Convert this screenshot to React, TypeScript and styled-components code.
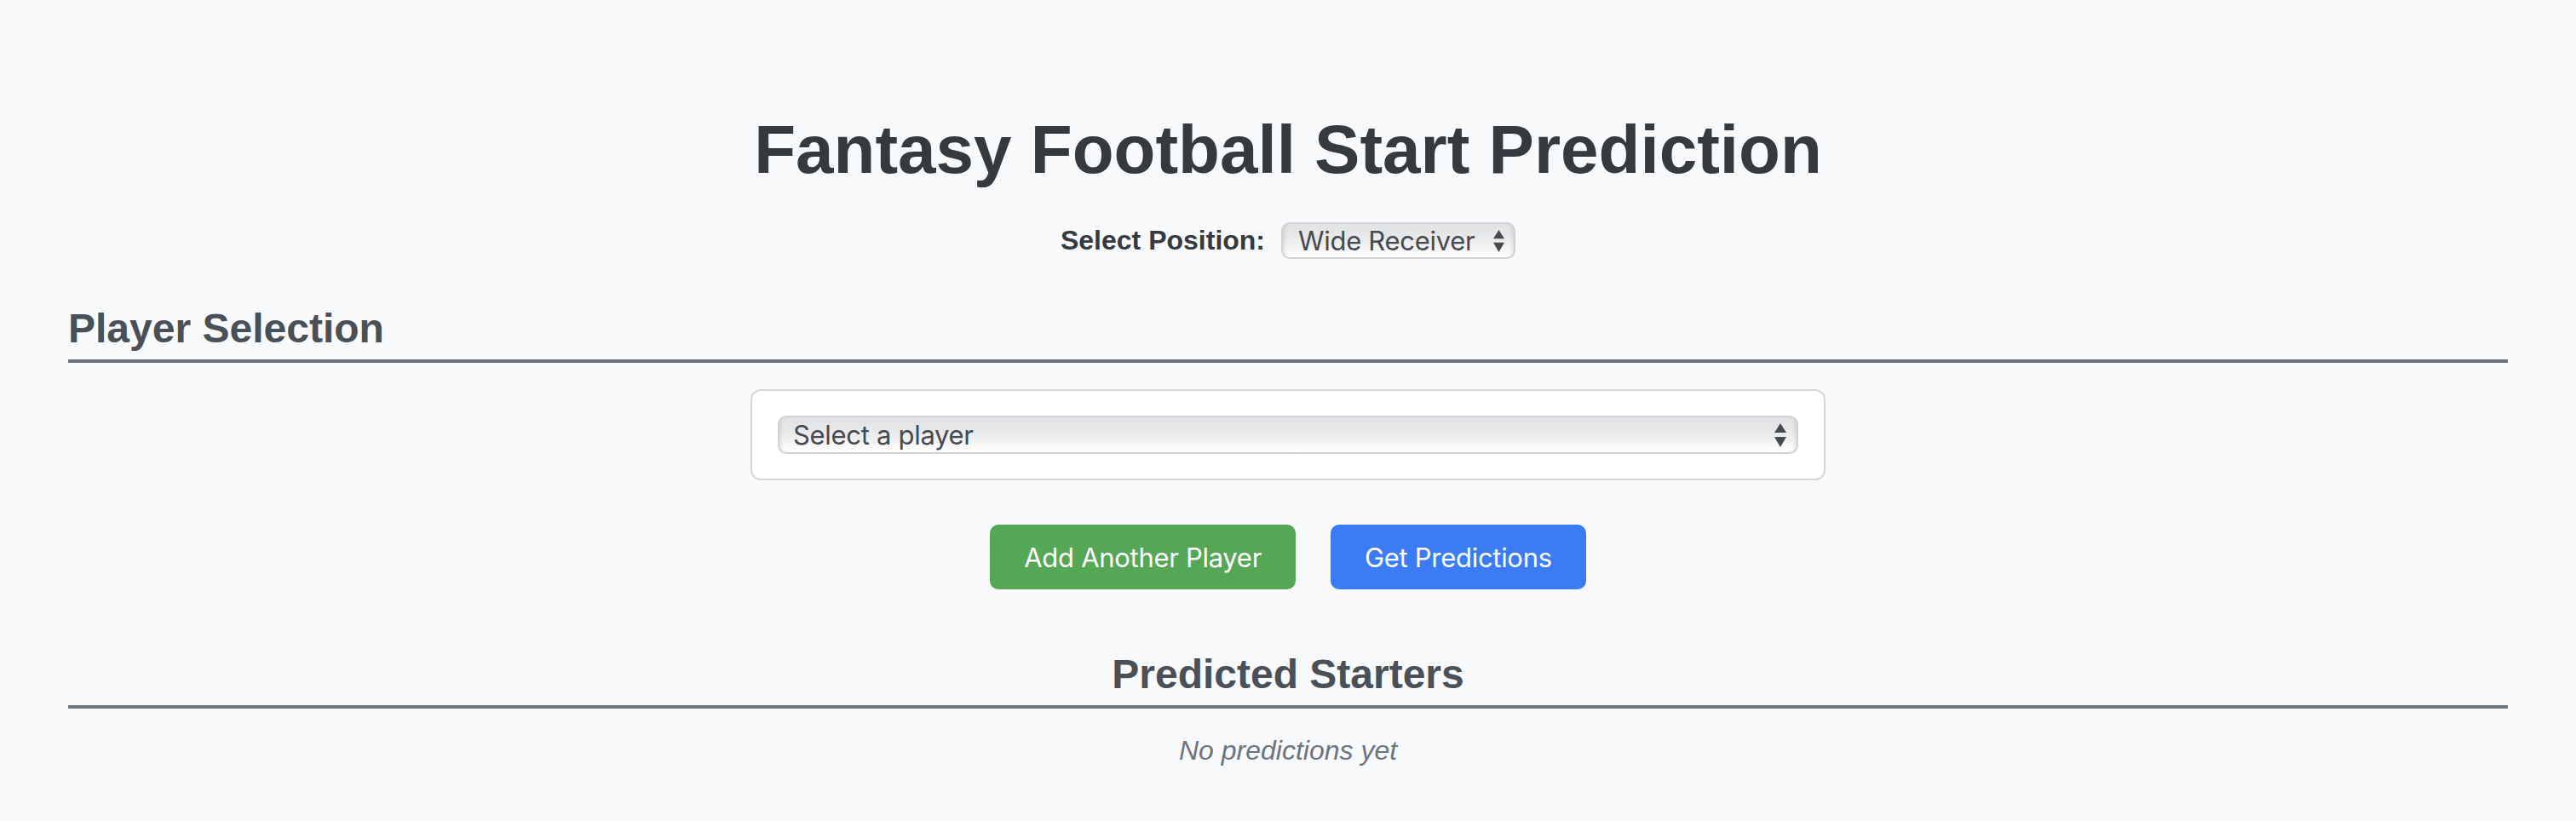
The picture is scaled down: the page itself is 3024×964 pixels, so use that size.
import styled, { createGlobalStyle } from 'styled-components';

const GlobalStyle = createGlobalStyle`
  html, body {
    margin: 0;
    padding: 0;
    background: #f8f9fa;
  }
  body {
    font-family: 'Liberation Sans', Arial, Helvetica, sans-serif;
    color: #343a40;
  }
`;

const Page = styled.div`
  padding: 130px 80px 60px;
  min-height: 964px;
  box-sizing: border-box;
`;

const Title = styled.h1`
  margin: 0;
  font-size: 80px;
  font-weight: 700;
  line-height: normal;
  text-align: center;
  color: #343a40;
`;

const PositionRow = styled.div`
  margin-top: 39px;
  display: flex;
  justify-content: center;
  align-items: center;
  gap: 19px;
`;

const Label = styled.label`
  font-size: 32px;
  font-weight: 700;
  color: #343a40;
`;

const SelectWrap = styled.div<{ $full?: boolean }>`
  position: relative;
  width: ${(p) => (p.$full ? '100%' : '275px')};
`;

const Select = styled.select<{ $full?: boolean }>`
  appearance: none;
  -webkit-appearance: none;
  display: block;
  width: 100%;
  box-sizing: border-box;
  height: ${(p) => (p.$full ? '45px' : '43px')};
  padding: 0 40px 0 ${(p) => (p.$full ? '16px' : '18px')};
  border: 2px solid #cfd2d6;
  border-radius: 10px;
  background: linear-gradient(
    to bottom,
    #e2e3e5 0%,
    #e6e7e9 35%,
    #eeeff0 60%,
    #f9f9fa 85%,
    #ffffff 100%
  );
  box-shadow: inset 5px 0 5px -4px rgba(0, 0, 0, 0.12),
    inset -5px 0 5px -4px rgba(0, 0, 0, 0.12);
  font-family: Inter, 'Liberation Sans', sans-serif;
  font-size: 31px;
  letter-spacing: -0.3px;
  color: #46494e;
  outline: none;
`;

const Arrows = styled.svg<{ $full?: boolean }>`
  position: absolute;
  right: ${(p) => (p.$full ? '14px' : '13px')};
  top: 50%;
  transform: translateY(-50%);
  width: ${(p) => (p.$full ? '14px' : '13px')};
  height: ${(p) => (p.$full ? '28px' : '26px')};
  pointer-events: none;
`;

const PlayerCard = styled.div`
  width: 1262px;
  box-sizing: border-box;
  margin: 31px auto 0;
  padding: 29px 30px;
  background: #ffffff;
  border: 2px solid #d3d6da;
  border-radius: 12px;
`;

const SectionTitle = styled.h2<{ $center?: boolean }>`
  margin: ${(p) => (p.$center ? '72px 0 0' : '54px 0 0')};
  padding-bottom: 9px;
  border-bottom: 4px solid #6c757d;
  font-size: 48px;
  font-weight: 700;
  line-height: normal;
  color: #495057;
  text-align: ${(p) => (p.$center ? 'center' : 'left')};
`;

const ButtonRow = styled.div`
  margin-top: 52px;
  display: flex;
  justify-content: center;
  gap: 41px;
`;

const Button = styled.button<{ $variant: 'green' | 'blue' }>`
  height: 76px;
  padding: 0 40px;
  border: none;
  border-radius: 10px;
  background: ${(p) => (p.$variant === 'green' ? '#55a655' : '#3b7cf4')};
  color: #ffffff;
  font-family: Inter, 'Liberation Sans', sans-serif;
  font-size: 31px;
  letter-spacing: -0.3px;
  cursor: pointer;
`;

const Empty = styled.p`
  margin: 31px 0 0;
  text-align: center;
  font-size: 32px;
  font-style: italic;
  color: #6c757d;
`;

const UpDown = ({ full }: { full?: boolean }) => (
  <Arrows $full={full} viewBox="0 0 14 28" preserveAspectRatio="none">
    <polygon points="7,0 14,11 0,11" fill="#46494e" />
    <polygon points="0,16 14,16 7,28" fill="#46494e" />
  </Arrows>
);

const App = () => {
  return (
    <>
      <GlobalStyle />
      <Page>
        <Title>Fantasy Football Start Prediction</Title>
        <PositionRow>
          <Label htmlFor="position">Select Position:</Label>
          <SelectWrap>
            <Select id="position" defaultValue="WR">
              <option value="QB">Quarterback</option>
              <option value="RB">Running Back</option>
              <option value="WR">Wide Receiver</option>
              <option value="TE">Tight End</option>
            </Select>
            <UpDown />
          </SelectWrap>
        </PositionRow>

        <SectionTitle>Player Selection</SectionTitle>
        <PlayerCard>
          <SelectWrap $full>
            <Select $full defaultValue="">
              <option value="">Select a player</option>
            </Select>
            <UpDown full />
          </SelectWrap>
        </PlayerCard>

        <ButtonRow>
          <Button $variant="green">Add Another Player</Button>
          <Button $variant="blue">Get Predictions</Button>
        </ButtonRow>

        <SectionTitle $center>Predicted Starters</SectionTitle>
        <Empty>No predictions yet</Empty>
      </Page>
    </>
  );
};

export default App;
